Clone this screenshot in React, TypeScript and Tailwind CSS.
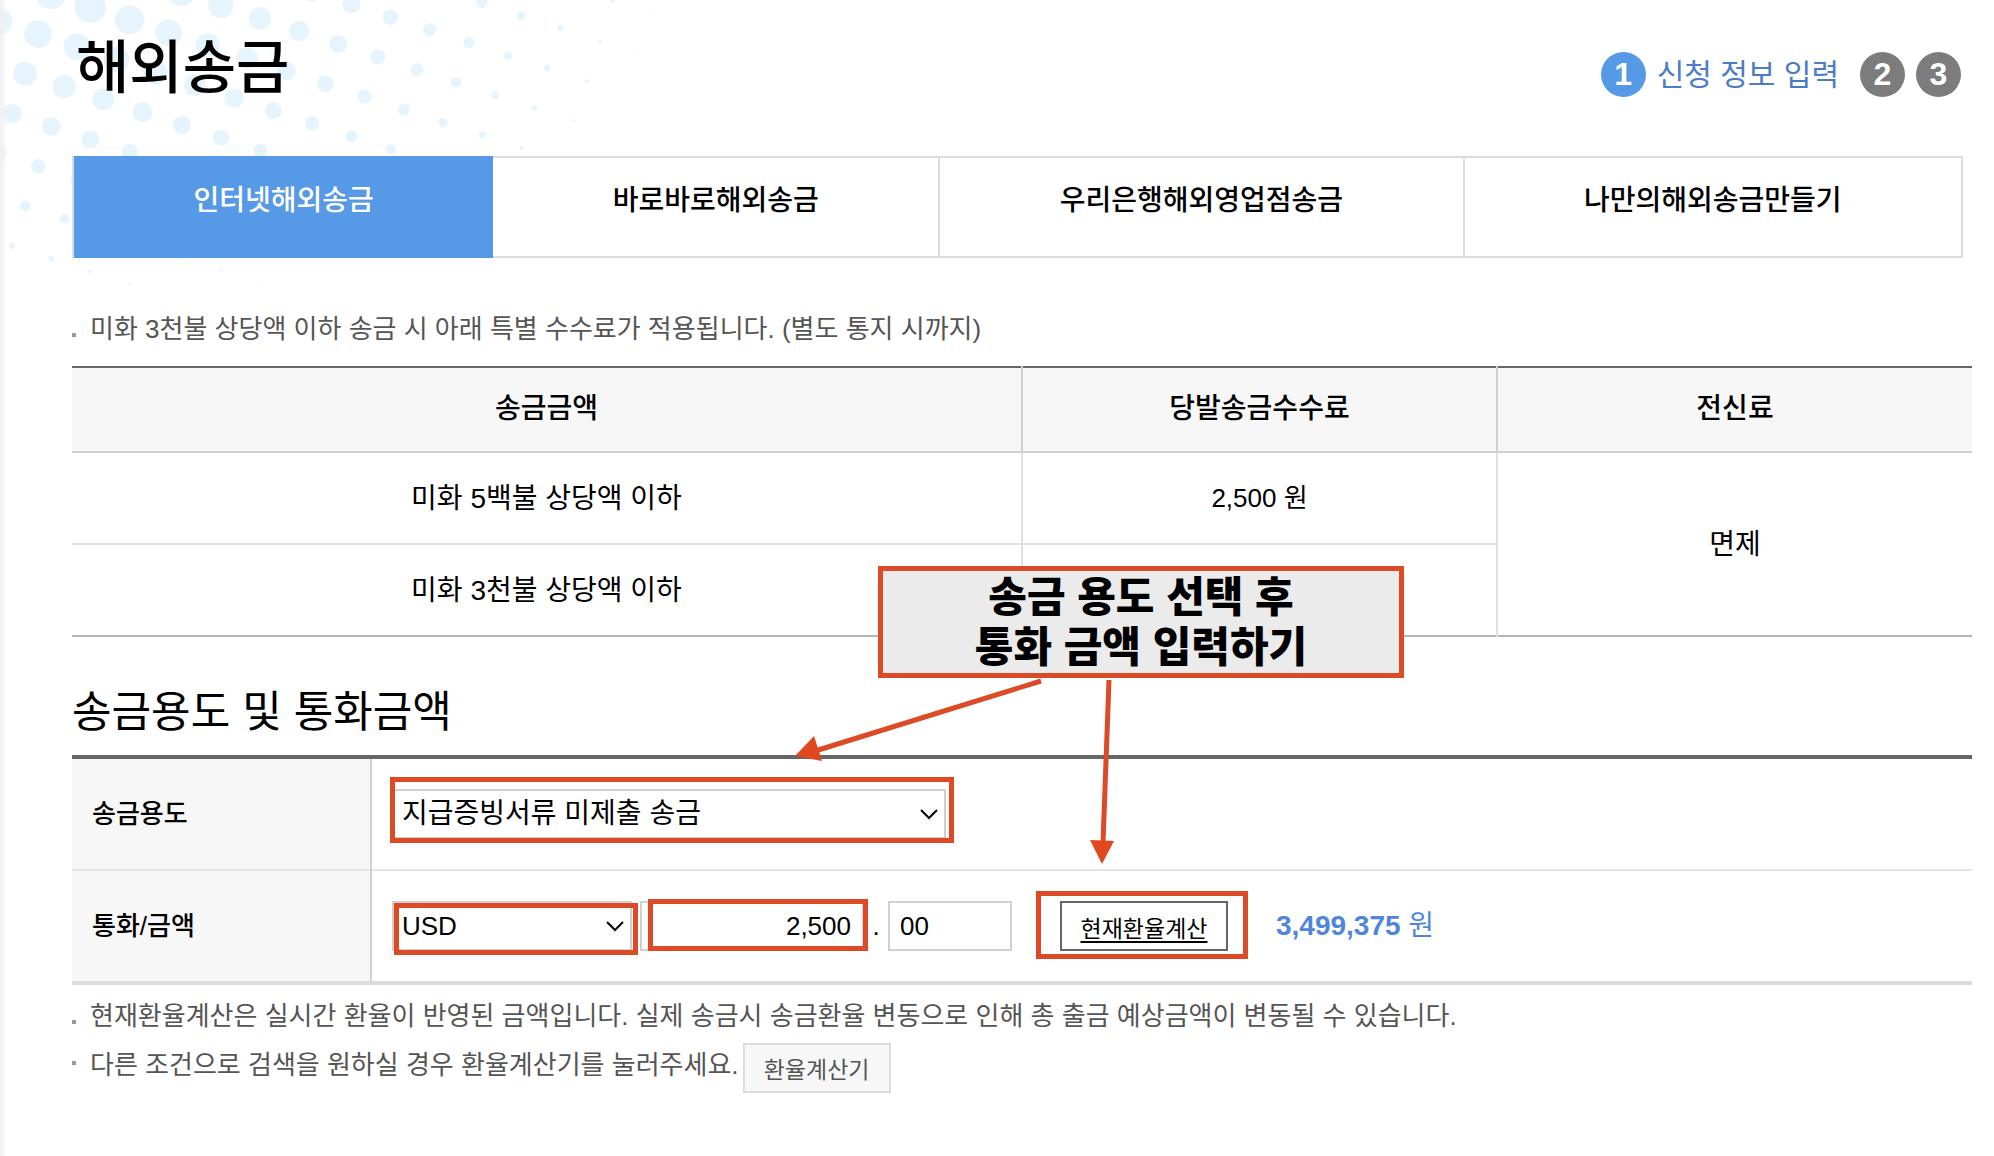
import React, { useState } from 'react';
import clsx from 'clsx';

const tabs = ['인터넷해외송금', '바로바로해외송금', '우리은행해외영업점송금', '나만의해외송금만들기'];

const purposes = ['지급증빙서류 미제출 송금', '유학생 송금', '해외체재자 송금'];

const currencies = ['USD', 'EUR', 'JPY', 'GBP'];

// Halftone dots in the top left corner, shrinking away from the origin
const dots: { x: number; y: number; r: number }[] = [];
for (let i = -3; i < 18; i++) {
  for (let j = -8; j < 10; j++) {
    const x = 38 + i * 39.2 - j * 13;
    const y = 34 + i * 12.8 + j * 39.8;
    const r = 16 * (1 - Math.hypot((x - 90) / 590, y / 310));
    if (x > -20 && y > -20 && r > 0.6) dots.push({ x, y, r });
  }
}

const DotPattern: React.FC = () => (
  <svg className="absolute left-0 top-0 -z-10" width="680" height="350" aria-hidden="true">
    {dots.map((d, i) => (
      <circle key={i} cx={d.x} cy={d.y} r={d.r} fill="#e6f4fd" />
    ))}
  </svg>
);

const Chevron: React.FC = () => (
  <svg
    className="pointer-events-none absolute right-2 top-1/2 -translate-y-1/2"
    width="18"
    height="12"
    fill="none"
    stroke="#000"
    strokeWidth="2"
    aria-hidden="true"
  >
    <path d="M1 2 L9 10 L17 2" />
  </svg>
);

const Note: React.FC<{ bullet?: string; children: React.ReactNode }> = ({ bullet = 'mt-3', children }) => (
  <li className="flex items-center text-[26px] leading-[34px] text-[#555]">
    <span className={clsx('mr-3.5 size-1 shrink-0 bg-[#999]', bullet)} />
    {children}
  </li>
);

const App: React.FC = () => {
  const [activeTab, setActiveTab] = useState(tabs[0]);
  const [purpose, setPurpose] = useState(purposes[0]);
  const [currency, setCurrency] = useState('USD');
  const [amount, setAmount] = useState('2,500');
  const [cents, setCents] = useState('00');

  return (
    <main
      lang="ko"
      className="relative isolate min-h-screen overflow-hidden bg-white pl-[72px] pr-[22px] font-['Liberation_Sans','Noto_Sans_CJK_KR',sans-serif] text-black"
    >
      <DotPattern />
      <div className="absolute inset-y-0 left-0 -z-10 w-2 bg-linear-to-r from-[#f0f0f0] to-transparent" />

      <header className="flex items-center justify-between pl-1 pr-[11px] pt-7">
        <h1 className="text-[58px] font-medium leading-[80px]">해외송금</h1>
        <ol className="mt-3 flex items-center gap-[11px] text-[30px] leading-[45px] text-[#4a7cc9]">
          <li className="mr-2.5 flex items-center gap-[11px]">
            <span className="size-[45px] rounded-full bg-[#5699e6] text-center text-[32px] font-bold text-white">1</span>
            신청 정보 입력
          </li>
          <li className="size-[45px] rounded-full bg-[#7c7c7c] text-center text-[32px] font-bold text-white">2</li>
          <li className="size-[45px] rounded-full bg-[#7c7c7c] text-center text-[32px] font-bold text-white">3</li>
        </ol>
      </header>

      <nav className="mr-[9px] mt-12 flex border-l-2 border-[#dcdcdc]">
        {tabs.map((tab) => (
          <button
            key={tab}
            onClick={() => setActiveTab(tab)}
            className={clsx(
              'h-[102px] flex-auto pb-3 text-[28px] font-medium leading-[40px]',
              tab === activeTab
                ? 'bg-[#5699e6] text-white'
                : 'border-y-2 border-r-2 border-[#dcdcdc] bg-white'
            )}
          >
            {tab}
          </button>
        ))}
      </nav>

      <ul className="mt-[54px]">
        <Note>미화 3천불 상당액 이하 송금 시 아래 특별 수수료가 적용됩니다. (별도 통지 시까지)</Note>
      </ul>

      {/* Fee table */}
      <table className="mt-5 w-full table-fixed border-collapse border-b-2 border-t-2 border-b-[#b4b4b4] border-t-[#666] text-center text-[28px] leading-[36px]">
        <thead>
          <tr className="h-[85px] border-b-2 border-[#d0d0d0] bg-[#f7f7f7]">
            <th className="w-1/2 border-r-2 border-[#d0d0d0] pb-0.5 font-medium">송금금액</th>
            <th className="w-1/4 border-r-2 border-[#d0d0d0] pb-0.5 font-medium">당발송금수수료</th>
            <th className="w-1/4 pb-0.5 font-medium">전신료</th>
          </tr>
        </thead>
        <tbody>
          <tr className="h-[92px]">
            <td className="border-b-2 border-r-2 border-[#e0e0e0] pt-0.5">미화 5백불 상당액 이하</td>
            <td className="border-b-2 border-r-2 border-[#e0e0e0] text-[26px]">2,500 원</td>
            <td rowSpan={2} className="pt-0.5">면제</td>
          </tr>
          <tr className="h-[92px]">
            <td className="border-r-2 border-[#e0e0e0] pt-0.5">미화 3천불 상당액 이하</td>
            <td className="border-r-2 border-[#e0e0e0]" />
          </tr>
        </tbody>
      </table>

      <section className="relative">
        <h2 className="pb-3 pt-11 text-[43px] leading-[62px]">송금용도 및 통화금액</h2>

        <table className="w-full border-collapse border-b-4 border-t-4 border-b-[#dcdcdc] border-t-[#666] text-[26px] leading-[36px]">
          <tbody>
            <tr className="h-[113px] border-b-2 border-[#e4e4e4]">
              <th className="w-[299px] border-r-2 border-[#d0d0d0] bg-[#f7f7f7] pl-5 text-left font-medium">
                <label htmlFor="purpose">송금용도</label>
              </th>
              <td className="pl-5">
                <div className="relative w-[554px]">
                  <select
                    id="purpose"
                    value={purpose}
                    onChange={(e) => setPurpose(e.target.value)}
                    className="h-[50px] w-full appearance-none border-2 border-[#d0d0d0] bg-white pl-2 text-[28px]"
                  >
                    {purposes.map((p) => (
                      <option key={p}>{p}</option>
                    ))}
                  </select>
                  <Chevron />
                  <span className="pointer-events-none absolute -bottom-1 -left-0.5 -right-2 -top-3 border-5 border-[#dc4a26]" />
                </div>
              </td>
            </tr>
            <tr className="h-[113px]">
              <th className="border-r-2 border-[#d0d0d0] bg-[#f7f7f7] pl-5 text-left font-medium">
                <label htmlFor="amount">통화/금액</label>
              </th>
              <td className="pl-5">
                <div className="flex items-center">
                  <div className="relative w-[240px]">
                    <select
                      aria-label="통화"
                      value={currency}
                      onChange={(e) => setCurrency(e.target.value)}
                      className="h-[50px] w-full appearance-none border-2 border-[#d0d0d0] bg-white pl-2"
                    >
                      {currencies.map((c) => (
                        <option key={c}>{c}</option>
                      ))}
                    </select>
                    <Chevron />
                    <span className="pointer-events-none absolute -bottom-1 -right-1.5 left-0.5 top-0.5 border-5 border-[#dc4a26]" />
                  </div>
                  <div className="relative ml-2 w-[224px]">
                    <input
                      id="amount"
                      value={amount}
                      onChange={(e) => setAmount(e.target.value)}
                      className="h-[50px] w-full border-2 border-[#d0d0d0] bg-white pr-[11px] text-right"
                    />
                    <span className="pointer-events-none absolute -right-1 -top-0.5 bottom-0 left-2 border-5 border-[#dc4a26]" />
                  </div>
                  <span className="w-6 text-center">.</span>
                  <input
                    aria-label="소수점 이하 금액"
                    value={cents}
                    onChange={(e) => setCents(e.target.value)}
                    className="h-[50px] w-[124px] border-2 border-[#d0d0d0] bg-white pl-2.5"
                  />
                  <div className="relative ml-12">
                    <button className="h-[50px] w-[168px] border-2 border-[#666] bg-white pt-1.5 text-[23px] underline decoration-2 underline-offset-4">
                      현재환율계산
                    </button>
                    <span className="pointer-events-none absolute -bottom-2 -left-6 -right-5 -top-2.5 border-5 border-[#dc4a26]" />
                  </div>
                  <p className="ml-12 text-[28px] text-[#4f86dc]">
                    <strong>3,499,375</strong> 원
                  </p>
                </div>
              </td>
            </tr>
          </tbody>
        </table>

        {/* Guide callout with arrows to the fields */}
        <p className="absolute -top-[71px] left-[806px] h-[112px] w-[526px] border-5 border-[#dc4a26] bg-[#ebebeb] pt-0.5 text-center text-[42px] font-black leading-[50px]">
          송금 용도 선택 후
          <br />
          통화 금액 입력하기
        </p>
        <svg
          className="pointer-events-none absolute left-[723px] top-10"
          width="330"
          height="190"
          aria-hidden="true"
        >
          <g stroke="#dc4a26" strokeWidth="5">
            <path d="M246 4 L20 74" />
            <path d="M314 3 L308 166" />
          </g>
          <g fill="#e04822">
            <path d="M0 79 L19 59 L27 84 Z" />
            <path d="M307 187 L295 163 L319 164 Z" />
          </g>
        </svg>
      </section>

      <ul className="mt-3.5 space-y-2.5">
        <Note>현재환율계산은 실시간 환율이 반영된 금액입니다. 실제 송금시 송금환율 변동으로 인해 총 출금 예상금액이 변동될 수 있습니다.</Note>
        <Note bullet="mb-2.5">
          <span className="pb-1.5">다른 조건으로 검색을 원하실 경우 환율계산기를 눌러주세요.</span>
          <button className="ml-1 h-[50px] w-[148px] border-2 border-[#dcdcdc] bg-[#f7f7f7] pt-1 text-[23px]">환율계산기</button>
        </Note>
      </ul>
    </main>
  );
};

export default App;
